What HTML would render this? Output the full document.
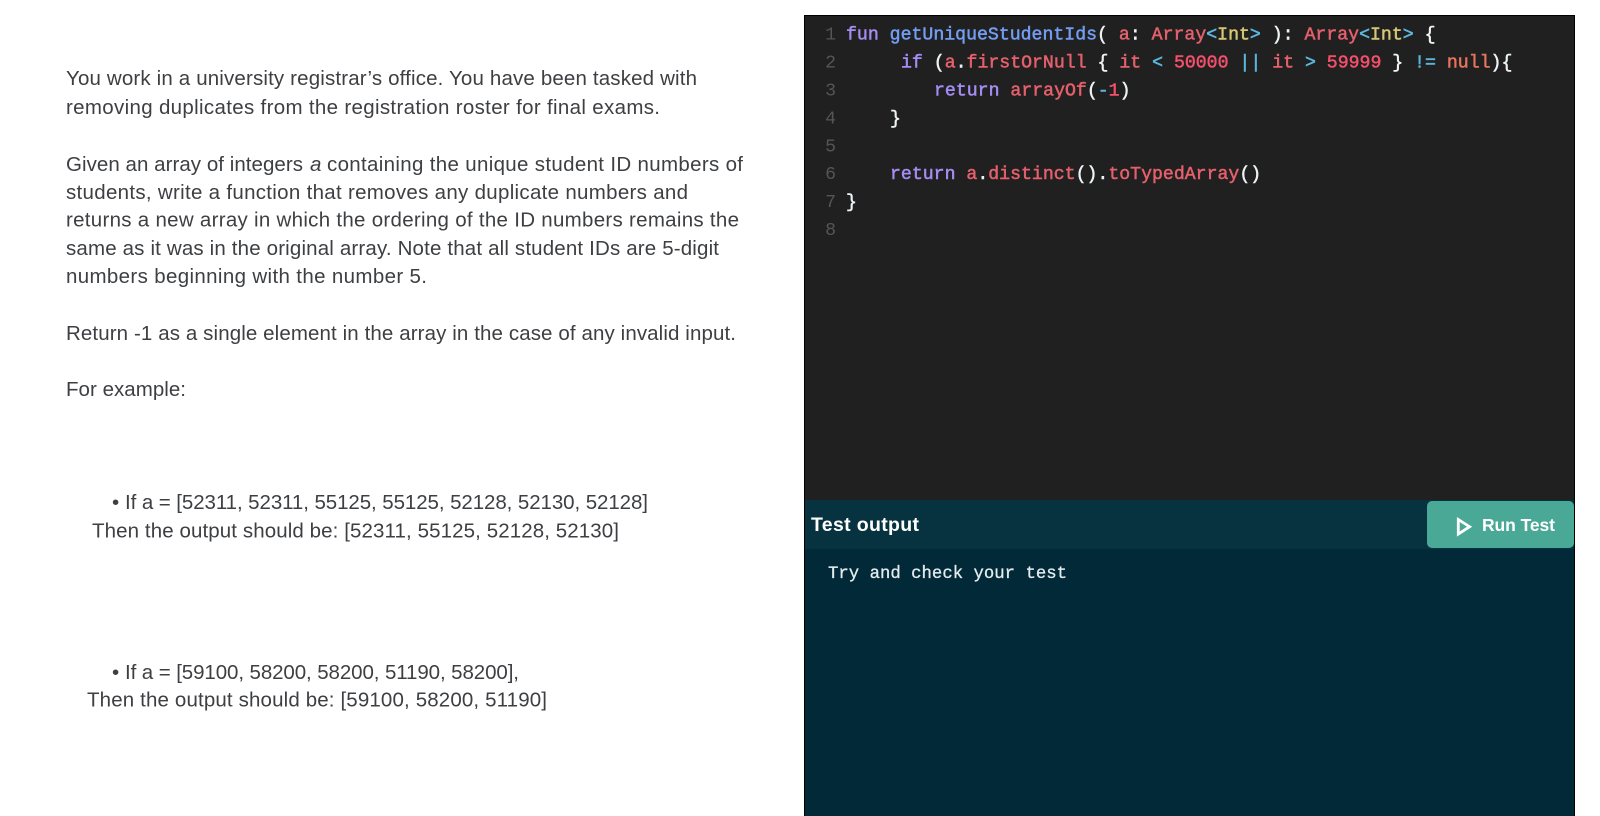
<!DOCTYPE html>
<html lang="en"><head><meta charset="utf-8"><title>Student IDs</title>
<style>
html,body{margin:0;padding:0;background:#fff;width:1600px;height:816px;overflow:hidden}
svg{position:absolute;left:0;top:0;display:block}
.t{font-family:"Liberation Sans",sans-serif;font-size:20.5px;fill:#3d3f42}
.m{font-family:"Liberation Mono",monospace;font-size:18.2px;white-space:pre;stroke-width:.5px}
.n{fill:#555;text-anchor:end;font-family:"Liberation Mono",monospace;font-size:18.2px}
.w{fill:#eef4f6;stroke:#eef4f6}.k{fill:#a58cf2;stroke:#a58cf2}.f{fill:#739df2;stroke:#739df2}.r{fill:#e5606c;stroke:#e5606c}.y{fill:#d6c873;stroke:#d6c873}.b{fill:#5cb8de;stroke:#5cb8de}.d{fill:#f4506c;stroke:#f4506c}.o{fill:#e9755c;stroke:#e9755c}
</style></head><body>
<svg width="1600" height="816" viewBox="0 0 1600 816" xmlns="http://www.w3.org/2000/svg" xml:space="preserve">
<rect x="804.5" y="15.5" width="770" height="802" fill="#202020" stroke="#000"/>
<rect x="805" y="500" width="769" height="49" fill="#073340"/>
<rect x="805" y="549" width="769" height="267" fill="#012938"/>
<rect x="1427" y="501" width="147" height="47" rx="5" fill="#4aa996"/>
<path d="M1458.3 519.5 L1469.6 526.7 L1458.3 534 Z" fill="none" stroke="#fff" stroke-width="2.8"/>

<text class="t" x="66" y="85" textLength="631">You work in a university registrar’s office. You have been tasked with</text>
<text class="t" x="66" y="114" textLength="594">removing duplicates from the registration roster for final exams.</text>
<text class="t" x="66" y="171" textLength="237">Given an array of integers</text>
<text class="t" x="310" y="171" font-style="italic">a</text>
<text class="t" x="327" y="171" textLength="416">containing the unique student ID numbers of</text>
<text class="t" x="66" y="199" textLength="622">students, write a function that removes any duplicate numbers and</text>
<text class="t" x="66" y="226.5" textLength="673">returns a new array in which the ordering of the ID numbers remains the</text>
<text class="t" x="66" y="255" textLength="653">same as it was in the original array. Note that all student IDs are 5-digit</text>
<text class="t" x="66" y="283" textLength="361">numbers beginning with the number 5.</text>
<text class="t" x="66" y="340" textLength="670">Return -1 as a single element in the array in the case of any invalid input.</text>
<text class="t" x="66" y="396" textLength="120">For example:</text>
<text class="t" x="112" y="509">•</text>
<text class="t" x="125" y="509" textLength="523">If a = [52311, 52311, 55125, 55125, 52128, 52130, 52128]</text>
<text class="t" x="92" y="537.5" textLength="527">Then the output should be: [52311, 55125, 52128, 52130]</text>
<text class="t" x="112" y="679">•</text>
<text class="t" x="125" y="679" textLength="394">If a = [59100, 58200, 58200, 51190, 58200],</text>
<text class="t" x="87" y="706.5" textLength="460">Then the output should be: [59100, 58200, 51190]</text>

<text class="n" x="836" y="39.7">1</text><text class="n" x="836" y="67.6">2</text><text class="n" x="836" y="95.5">3</text><text class="n" x="836" y="123.4">4</text><text class="n" x="836" y="151.3">5</text><text class="n" x="836" y="179.2">6</text><text class="n" x="836" y="207.1">7</text><text class="n" x="836" y="235">8</text>

<text class="m" x="846" y="39.7"><tspan class="k">fun</tspan><tspan class="w"> </tspan><tspan class="f">getUniqueStudentIds</tspan><tspan class="w">( </tspan><tspan class="r">a</tspan><tspan class="w">: </tspan><tspan class="r">Array</tspan><tspan class="b">&lt;</tspan><tspan class="y">Int</tspan><tspan class="b">&gt;</tspan><tspan class="w"> ): </tspan><tspan class="r">Array</tspan><tspan class="b">&lt;</tspan><tspan class="y">Int</tspan><tspan class="b">&gt;</tspan><tspan class="w"> {</tspan></text>
<text class="m" x="901" y="67.6"><tspan class="k">if</tspan><tspan class="w"> (</tspan><tspan class="r">a</tspan><tspan class="w">.</tspan><tspan class="r">firstOrNull</tspan><tspan class="w"> { </tspan><tspan class="r">it</tspan><tspan class="b"> &lt; </tspan><tspan class="d">50000</tspan><tspan class="b"> || </tspan><tspan class="r">it</tspan><tspan class="b"> &gt; </tspan><tspan class="d">59999</tspan><tspan class="w"> } </tspan><tspan class="b">!=</tspan><tspan class="w"> </tspan><tspan class="o">null</tspan><tspan class="w">){</tspan></text>
<text class="m" x="934" y="95.5"><tspan class="k">return</tspan><tspan class="w"> </tspan><tspan class="r">arrayOf</tspan><tspan class="w">(</tspan><tspan class="b">-</tspan><tspan class="d">1</tspan><tspan class="w">)</tspan></text>
<text class="m" x="890" y="123.4"><tspan class="w">}</tspan></text>
<text class="m" x="890" y="179.2"><tspan class="k">return</tspan><tspan class="w"> </tspan><tspan class="r">a</tspan><tspan class="w">.</tspan><tspan class="r">distinct</tspan><tspan class="w">().</tspan><tspan class="r">toTypedArray</tspan><tspan class="w">()</tspan></text>
<text class="m" x="846" y="207.1"><tspan class="w">}</tspan></text>

<text x="811" y="531" textLength="108" font-family="'Liberation Sans',sans-serif" font-size="19.5px" font-weight="700" fill="#fff">Test output</text>
<text x="828" y="578" textLength="239" font-family="'Liberation Mono',monospace" font-size="17.3px" fill="#e4ecee" stroke="#e4ecee" stroke-width=".3" xml:space="preserve">Try and check your test</text>
<text x="1482" y="531" textLength="73" font-family="'Liberation Sans',sans-serif" font-size="17.5px" font-weight="700" fill="#fff">Run Test</text>
</svg>
</body></html>
